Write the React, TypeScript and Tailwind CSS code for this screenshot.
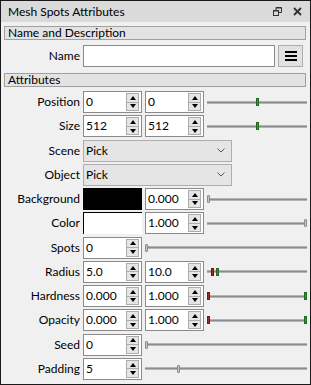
import React from "react";

const font = { fontFamily: "Lato, 'Liberation Sans', sans-serif" };

function Tri({ up }: { up: boolean }) {
  return up ? (
    <div className="w-0 h-0 border-l-[3px] border-r-[3px] border-b-[4px] border-l-transparent border-r-transparent border-b-black" />
  ) : (
    <div className="w-0 h-0 border-l-[3px] border-r-[3px] border-t-[4px] border-l-transparent border-r-transparent border-t-black" />
  );
}

function Spin({ value }: { value: string }) {
  return (
    <div className="h-[22px] w-[59px] border border-[#8a8a8a] bg-white flex items-stretch py-[1px] pr-[2px]">
      <div className="flex-1 flex items-center pl-[2px] text-[12px] text-black leading-none">{value}</div>
      <div className="w-[13px] flex flex-col">
        <div className="flex-1 bg-[#e5e5e5] border border-[#acacac] flex items-center justify-center">
          <Tri up />
        </div>
        <div className="flex-1 bg-[#e5e5e5] border border-[#acacac] border-t-0 flex items-center justify-center">
          <Tri up={false} />
        </div>
      </div>
    </div>
  );
}

type Handle = { pos: number; color: "green" | "red" | "gray" };

function Slider({ handles }: { handles: Handle[] }) {
  return (
    <div className="flex-1 h-[22px] relative flex items-center">
      <div className="w-full h-[3px] bg-[#8c8c8c] border-y border-[#b4b4b4]" />
      {handles.map((h, i) => (
        <div
          key={i}
          className={
            h.color === "green"
              ? "absolute top-[7px] w-[3px] h-[8px] bg-[#2f9a2f] border border-[#1f6a1f]"
              : h.color === "red"
              ? "absolute top-[7px] w-[3px] h-[8px] bg-[#a02828] border border-[#6a1818]"
              : "absolute top-[7px] w-[3px] h-[8px] bg-[#c8c8c8] border border-[#8a8a8a] rounded-[1px]"
          }
          style={{ left: `calc(${h.pos}% - ${h.pos * 0.03}px)` }}
        />
      ))}
    </div>
  );
}

function Label({ text }: { text: string }) {
  return (
    <div className="w-[76px] shrink-0 text-right text-[12px] text-black pr-[0px]">{text}</div>
  );
}

function Row({ label, children }: { label: string; children: React.ReactNode }) {
  return (
    <div className="flex items-center gap-[3px] h-[22px]">
      <Label text={label} />
      {children}
    </div>
  );
}

function Combo({ value }: { value: string }) {
  return (
    <div className="h-[22px] w-[149px] bg-[#e5e5e5] border border-[#adadad] flex items-center pl-[2px] pr-[6px] text-[12px]">
      <span className="flex-1">{value}</span>
      <svg width="8" height="5" viewBox="0 0 8 5">
        <path d="M0.5 0.5 L4 4 L7.5 0.5" fill="none" stroke="#555" strokeWidth="1" />
      </svg>
    </div>
  );
}

function Header({ text }: { text: string }) {
  return (
    <div className="h-[14px] mr-[1px] border border-[#a0a0a0] bg-[#e3e3e3] flex items-center pl-[3px] text-[12px] text-black leading-none">
      {text}
    </div>
  );
}

export default function App() {
  return (
    <div className="w-[311px] h-[385px] border border-[#1a1a1a] bg-[#f0f0f0] flex flex-col" style={font}>
      <div className="h-[21px] bg-[#dadada] flex items-center pl-[7px] pr-[8px] text-[12px] text-black">
        <span className="flex-1">Mesh Spots Attributes</span>
        <svg width="9" height="9" viewBox="0 0 9 9" className="mr-[11px]">
          <path d="M3 3 V0.5 H8.5 V5.5 H6" fill="none" stroke="#333" strokeWidth="1" />
          <path d="M3 1 H8" stroke="#333" strokeWidth="1" />
          <rect x="0.5" y="3.5" width="5" height="5" fill="none" stroke="#333" strokeWidth="1" />
          <path d="M1 4 H5.5" stroke="#333" strokeWidth="1" />
        </svg>
        <svg width="9" height="9" viewBox="0 0 9 9">
          <path d="M1 1 L8 8 M8 1 L1 8" stroke="#333" strokeWidth="1.8" />
        </svg>
      </div>
      <div className="flex-1 flex flex-col pl-[3px] pr-[3px] pt-[4px]">
        <Header text="Name and Description" />
        <div className="flex items-center gap-[3px] h-[22px] mt-[5px]">
          <Label text="Name" />
          <div className="w-[192px] h-[22px] bg-white border border-[#8a8a8a]" />
          <div className="w-[25px] h-[22px] bg-[#e1e1e1] border border-[#adadad] flex flex-col items-center justify-center gap-[2px]">
            <div className="w-[12px] h-[2px] bg-black" />
            <div className="w-[12px] h-[2px] bg-black" />
            <div className="w-[12px] h-[2px] bg-black" />
          </div>
        </div>
        <div className="mt-[6px]">
          <Header text="Attributes" />
        </div>
        <div className="mt-[4px] h-[289px] flex flex-col justify-between">
          <Row label="Position">
            <Spin value="0" />
            <Spin value="0" />
            <Slider handles={[{ pos: 50, color: "green" }]} />
          </Row>
          <Row label="Size">
            <Spin value="512" />
            <Spin value="512" />
            <Slider handles={[{ pos: 50, color: "green" }]} />
          </Row>
          <Row label="Scene">
            <Combo value="Pick" />
          </Row>
          <Row label="Object">
            <Combo value="Pick" />
          </Row>
          <Row label="Background">
            <div className="w-[59px] h-[22px] bg-black" />
            <Spin value="0.000" />
            <Slider handles={[{ pos: 0, color: "gray" }]} />
          </Row>
          <Row label="Color">
            <div className="w-[59px] h-[22px] bg-white border-t border-l border-black" />
            <Spin value="1.000" />
            <Slider handles={[{ pos: 100, color: "gray" }]} />
          </Row>
          <Row label="Spots">
            <Spin value="0" />
            <Slider handles={[{ pos: 0, color: "gray" }]} />
          </Row>
          <Row label="Radius">
            <Spin value="5.0" />
            <Spin value="10.0" />
            <Slider
              handles={[
                { pos: 4, color: "red" },
                { pos: 9, color: "green" },
              ]}
            />
          </Row>
          <Row label="Hardness">
            <Spin value="0.000" />
            <Spin value="1.000" />
            <Slider
              handles={[
                { pos: 0, color: "red" },
                { pos: 100, color: "green" },
              ]}
            />
          </Row>
          <Row label="Opacity">
            <Spin value="0.000" />
            <Spin value="1.000" />
            <Slider
              handles={[
                { pos: 0, color: "red" },
                { pos: 100, color: "green" },
              ]}
            />
          </Row>
          <Row label="Seed">
            <Spin value="0" />
            <Slider handles={[{ pos: 0, color: "gray" }]} />
          </Row>
          <Row label="Padding">
            <Spin value="5" />
            <Slider handles={[{ pos: 20, color: "gray" }]} />
          </Row>
        </div>
      </div>
    </div>
  );
}
